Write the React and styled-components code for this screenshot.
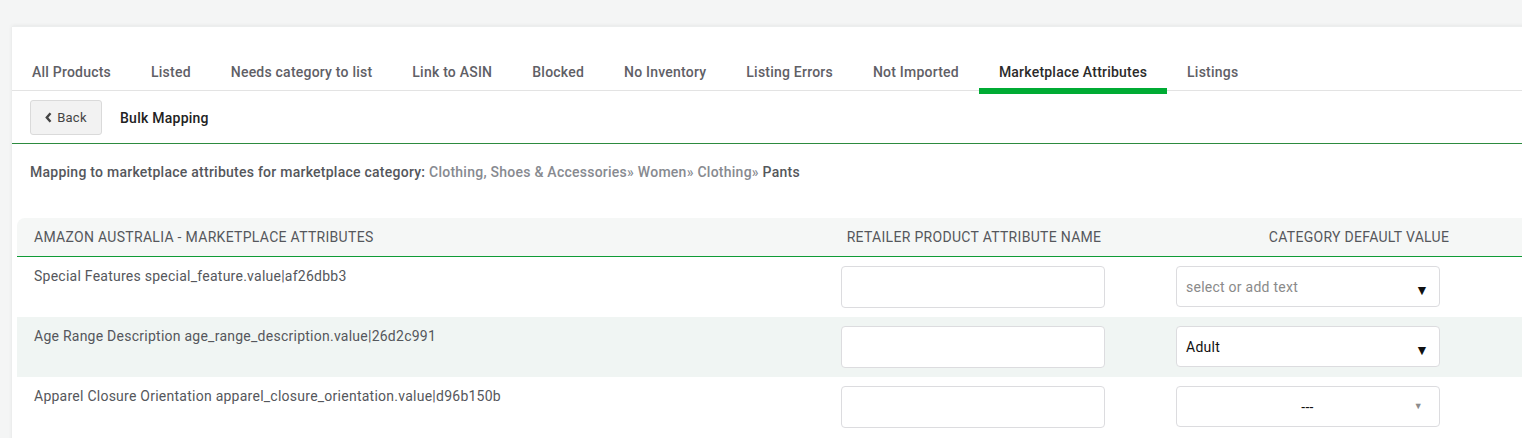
import React from "react";
import styled, { createGlobalStyle } from "styled-components";

const GlobalStyle = createGlobalStyle`
  html, body {
    margin: 0;
    padding: 0;
    background: #f4f5f5;
    overflow: hidden;
    font-family: Roboto, "Liberation Sans", sans-serif;
  }
`;

const Page = styled.div`
  padding: 26px 0 0 12px;
  width: 1600px;
  letter-spacing: 0.25px;
`;

const Card = styled.div`
  background: #fff;
  box-shadow: 0 0 4px rgba(0, 0, 0, 0.08);
  border-top: 1px solid #eceeee;
  min-height: 420px;
`;

const Tabs = styled.div`
  display: flex;
  padding-top: 35px;
  border-bottom: 1px solid #e3e3e3;
  height: 28px;
`;

const Tab = styled.div`
  position: relative;
  padding: 0 20px;
  font-size: 14px;
  font-weight: 500;
  letter-spacing: 0.22px;
  color: ${(p) => (p.$active ? "#2b2b2b" : "#5f6066")};
  line-height: 20px;
  &::after {
    content: "";
    display: ${(p) => (p.$active ? "block" : "none")};
    position: absolute;
    left: 0;
    right: 0;
    bottom: -4px;
    height: 6px;
    background: #00ab34;
  }
`;

const Toolbar = styled.div`
  display: flex;
  align-items: center;
  gap: 18px;
  padding: 9px 18px 8px 18px;
  border-bottom: 1px solid #2d8b3f;
  height: 35px;
`;

const BackButton = styled.button`
  display: flex;
  align-items: center;
  gap: 5px;
  height: 35px;
  width: 72px;
  justify-content: center;
  background: #f2f2f2;
  border: 1px solid #dadada;
  border-radius: 3px;
  font-family: Roboto, "Liberation Sans", sans-serif;
  font-size: 13px;
  letter-spacing: 0.25px;
  color: #444;
  padding: 0 0 1px 0;
`;

const Chevron = styled.svg`
  width: 7px;
  height: 11px;
  flex: none;
`;

const ToolbarTitle = styled.div`
  font-size: 14px;
  font-weight: 500;
  color: #222;
`;

const Breadcrumb = styled.div`
  padding: 20px 18px 0 18px;
  font-size: 14px;
  font-weight: 500;
  color: #55575c;
  height: 54px;
`;

const Crumb = styled.span`
  color: ${(p) => (p.$last ? "#55575c" : "#878a90")};
`;

const Table = styled.div`
  margin-left: 5px;
  display: grid;
  grid-template-columns: 804px 306px 464px;
`;

const HeadCell = styled.div`
  background: #f5f7f6;
  border-bottom: 1px solid #0f9b36;
  height: 38px;
  display: flex;
  align-items: center;
  justify-content: ${(p) => (p.$center ? "center" : "flex-start")};
  padding-left: ${(p) => (p.$center ? "0" : "17px")};
  font-size: 14px;
  color: #55575c;
  text-transform: uppercase;
  letter-spacing: 0.3px;
  border-top-left-radius: ${(p) => (p.$first ? "8px" : "0")};
`;

const Cell = styled.div`
  background: ${(p) => (p.$shade ? "#f0f5f3" : "#fff")};
  height: 60px;
  box-sizing: border-box;
  font-size: 14px;
  color: #55575c;
`;

const LabelCell = styled(Cell)`
  padding: 11px 0 0 17px;
`;

const InputCell = styled(Cell)`
  padding: 9px 0 0 20px;
`;

const TextInput = styled.input`
  box-sizing: border-box;
  width: 264px;
  height: 42px;
  border: 1px solid #dcdcdf;
  border-radius: 4px;
  background: #fff;
`;

const SelectCell = styled(Cell)`
  padding: 9px 0 0 49px;
`;

const SelectBox = styled.div`
  box-sizing: border-box;
  width: 264px;
  height: 41px;
  border: 1px solid #dcdcdf;
  border-radius: 4px;
  background: #fff;
  display: flex;
  align-items: center;
  position: relative;
  padding: 0 10px 0 9px;
  font-size: 14px;
  color: ${(p) => (p.$placeholder ? "#8a8a8a" : "#111")};
  justify-content: ${(p) => (p.$center ? "center" : "space-between")};
`;

const Caret = styled.span`
  font-size: ${(p) => (p.$small ? "9px" : "14px")};
  color: ${(p) => (p.$small ? "#8c8c8c" : "#111")};
  margin-top: ${(p) => (p.$small ? "-2px" : "6px")};
  position: ${(p) => (p.$small ? "absolute" : "static")};
  right: 16px;
`;

const tabs = [
  "All Products",
  "Listed",
  "Needs category to list",
  "Link to ASIN",
  "Blocked",
  "No Inventory",
  "Listing Errors",
  "Not Imported",
  "Marketplace Attributes",
  "Listings",
];

const rows = [
  { label: "Special Features special_feature.value|af26dbb3", value: "select or add text", kind: "placeholder" },
  { label: "Age Range Description age_range_description.value|26d2c991", value: "Adult", kind: "value" },
  { label: "Apparel Closure Orientation apparel_closure_orientation.value|d96b150b", value: "---", kind: "empty" },
];

const Row = ({ row, shade }) => (
  <>
    <LabelCell $shade={shade}>{row.label}</LabelCell>
    <InputCell $shade={shade}>
      <TextInput />
    </InputCell>
    <SelectCell $shade={shade}>
      {row.kind === "empty" ? (
        <SelectBox $center>
          <span>{row.value}</span>
          <Caret $small>▼</Caret>
        </SelectBox>
      ) : (
        <SelectBox $placeholder={row.kind === "placeholder"}>
          <span>{row.value}</span>
          <Caret>▼</Caret>
        </SelectBox>
      )}
    </SelectCell>
  </>
);

export default function App() {
  return (
    <>
      <GlobalStyle />
      <Page>
        <Card>
          <Tabs>
            {tabs.map((t) => (
              <Tab key={t} $active={t === "Marketplace Attributes"}>
                {t}
              </Tab>
            ))}
          </Tabs>
          <Toolbar>
            <BackButton>
              <Chevron viewBox="0 0 7 11">
                <polyline points="5.5,1.2 1.8,5.5 5.5,9.8" fill="none" stroke="#444" strokeWidth="2.4" />
              </Chevron>
              Back
            </BackButton>
            <ToolbarTitle>Bulk Mapping</ToolbarTitle>
          </Toolbar>
          <Breadcrumb>
            Mapping to marketplace attributes for marketplace category:{" "}
            <Crumb>Clothing, Shoes &amp; Accessories» </Crumb>
            <Crumb>Women» </Crumb>
            <Crumb>Clothing» </Crumb>
            <Crumb $last>Pants</Crumb>
          </Breadcrumb>
          <Table>
            <HeadCell $first>Amazon Australia - Marketplace Attributes</HeadCell>
            <HeadCell $center>Retailer Product Attribute Name</HeadCell>
            <HeadCell $center>Category Default Value</HeadCell>
            {rows.map((r, i) => (
              <Row key={r.label} row={r} shade={i % 2 === 1} />
            ))}
          </Table>
        </Card>
      </Page>
    </>
  );
}
